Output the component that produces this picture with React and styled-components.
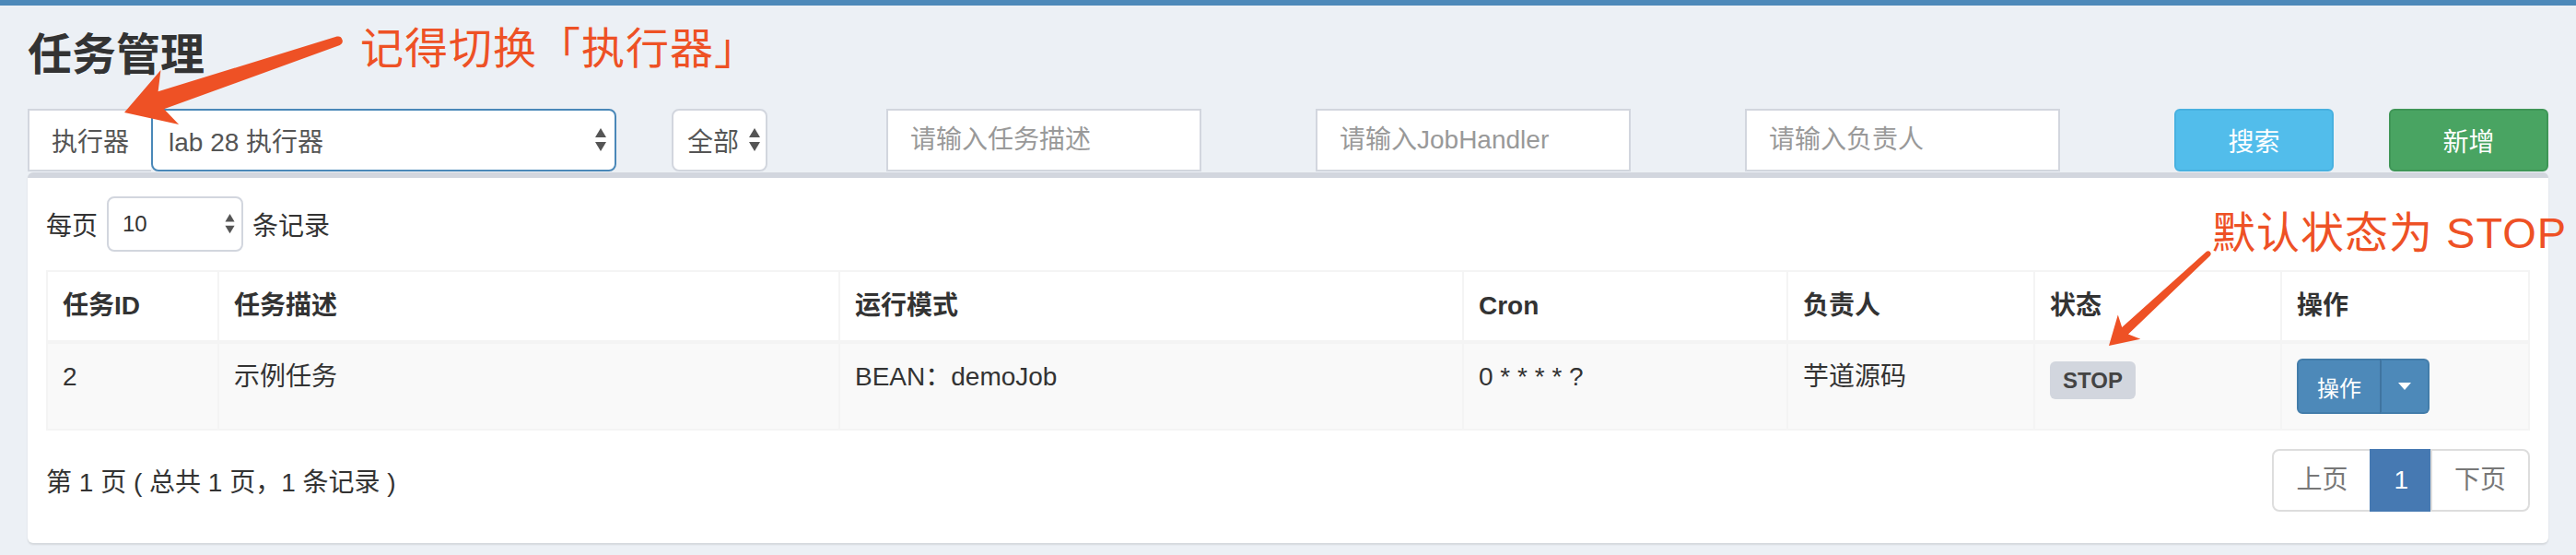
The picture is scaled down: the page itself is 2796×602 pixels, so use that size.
import React from 'react';
import styled, { createGlobalStyle, css } from 'styled-components';

const FONT = `"Liberation Sans", "Noto Sans CJK SC", sans-serif`;
const ACCENT = '#ee5125';

const GlobalStyle = createGlobalStyle`
  *, *::before, *::after { box-sizing: border-box; }
  html, body { margin: 0; padding: 0; background: #ecf0f5; }
  body { font-family: ${FONT}; color: #333; font-size: 28px; }
`;

const Page = styled.div`
  position: relative;
  width: 2796px;
  height: 602px;
  overflow: hidden;
  background: #ecf0f5;
  font-family: ${FONT};
  color: #333;
`;

const TopBar = styled.div`
  height: 6px;
  background: #4d89b9;
`;

const ContentHeader = styled.header`
  padding: 28px 30px 0;
`;

const Title = styled.h1`
  margin: 0;
  font-size: 48px;
  line-height: 52px;
  font-weight: 700;
  color: #333;
`;

const FilterRow = styled.div`
  display: grid;
  grid-template-columns: repeat(12, 1fr);
  margin-top: 32px;
  height: 68px;
`;

const Col = styled.div`
  grid-column: span ${(p) => p.$span};
  padding: 0 30px;
  display: flex;
  align-items: stretch;
`;

const InputGroup = styled.div`
  display: flex;
  flex: 1;
`;

const Addon = styled.span`
  display: flex;
  align-items: center;
  padding: 0 24px;
  background: #fff;
  border: 2px solid #d2d6de;
  border-right: none;
  font-size: 28px;
  color: #555;
  white-space: nowrap;
`;

const SelectBox = styled.div`
  display: flex;
  align-items: center;
  justify-content: space-between;
  gap: ${(p) => p.$gap || 10}px;
  height: ${(p) => p.$h}px;
  ${(p) => (p.$w ? css`width: ${p.$w}px;` : css`flex: ${p.$grow ? 1 : '0 0 auto'};`)}
  padding: 0 ${(p) => p.$pr}px 0 ${(p) => p.$pl}px;
  background: #fff;
  border: 2px solid ${(p) => (p.$focus ? '#4a88b8' : '#d2d6de')};
  border-radius: 8px;
  font-size: ${(p) => p.$fs}px;
  color: ${(p) => p.$color || '#555'};
  white-space: nowrap;
`;

const TextInput = styled.input`
  width: 342px;
  height: 68px;
  padding: 0 24px;
  border: 2px solid #d2d6de;
  border-radius: 0;
  background: #fff;
  font-family: ${FONT};
  font-size: 28px;
  color: #555;
  outline: none;
  &::placeholder { color: #999; }
`;

const variants = {
  info: { bg: '#52bdeb', border: '#48b1e0' },
  success: { bg: '#49a462', border: '#3f9657' },
  primary: { bg: '#4d89b9', border: '#437daa' },
};

const BlockButton = styled.button`
  width: 100%;
  height: 68px;
  border-radius: 6px;
  border: 2px solid ${(p) => variants[p.$variant].border};
  background: ${(p) => variants[p.$variant].bg};
  color: #fff;
  font-family: ${FONT};
  font-size: 28px;
  cursor: pointer;
`;

const BoxWrap = styled.section`
  padding: 1px 30px 0;
`;

const Box = styled.div`
  background: #fff;
  border-top: 6px solid #d2d6de;
  border-radius: 6px;
  box-shadow: 0 2px 2px rgba(0, 0, 0, 0.1);
  padding: 20px 20px 16px;
`;

const LengthRow = styled.div`
  display: flex;
  align-items: center;
  gap: 10px;
  height: 60px;
  font-size: 28px;
  color: #333;
`;

const Table = styled.table`
  width: 100%;
  margin-top: 20px;
  table-layout: fixed;
  border-collapse: separate;
  border-spacing: 0;
  border-top: 2px solid #f4f4f4;
  border-left: 2px solid #f4f4f4;
  font-size: 28px;
`;

const Th = styled.th`
  text-align: left;
  font-weight: 700;
  color: #333;
  line-height: 40px;
  padding: 17px 16px;
  border-right: 2px solid #f4f4f4;
  border-bottom: 4px solid #f4f4f4;
  background: #fff;
`;

const Td = styled.td`
  vertical-align: top;
  line-height: 40px;
  padding: 16px;
  color: #333;
  border-right: 2px solid #f4f4f4;
  border-bottom: 2px solid #f4f4f4;
  background: #f9f9f9;
  white-space: nowrap;
`;

const Label = styled.span`
  display: inline-block;
  margin-top: 3px;
  padding: 9px 14px 8px;
  line-height: 24px;
  font-size: 24px;
  font-weight: 700;
  color: #444;
  background: #d2d6de;
  border-radius: 6px;
  vertical-align: top;
`;

const BtnGroup = styled.div`
  display: inline-flex;
  height: 60px;
  vertical-align: top;
`;

const GroupBtn = styled.button`
  display: flex;
  align-items: center;
  justify-content: center;
  height: 60px;
  padding: 0 ${(p) => (p.$caret ? 18 : 20)}px;
  background: ${variants.primary.bg};
  border: 2px solid ${variants.primary.border};
  color: #fff;
  font-family: ${FONT};
  font-size: 24px;
  border-radius: ${(p) => (p.$caret ? '0 6px 6px 0' : '6px 0 0 6px')};
  ${(p) => p.$caret && css`margin-left: -2px; border-left-color: #3f74a0;`}
`;

const Caret = styled.span`
  width: 0;
  height: 0;
  border-top: 8px solid #fff;
  border-left: 7px solid transparent;
  border-right: 7px solid transparent;
`;

const Footer = styled.div`
  display: flex;
  justify-content: space-between;
  align-items: center;
  margin: 20px 0 18px;
`;

const Info = styled.div`
  font-size: 28px;
  color: #333;
  white-space: pre;
`;

const Pager = styled.ul`
  display: flex;
  margin: 0;
  padding: 0;
  list-style: none;
`;

const PageItem = styled.li`
  height: 68px;
  padding: 0 24px;
  line-height: 64px;
  font-size: 28px;
  border: 2px solid ${(p) => (p.$active ? '#4679b2' : '#ddd')};
  background: ${(p) => (p.$active ? '#4679b2' : '#fff')};
  color: ${(p) => (p.$active ? '#fff' : '#777')};
  &:not(:first-child) { margin-left: -2px; }
  &:first-child { border-radius: 8px 0 0 8px; }
  &:last-child { border-radius: 0 8px 8px 0; }
`;

const Overlay = styled.svg`
  position: absolute;
  left: 0;
  top: 0;
  pointer-events: none;
`;

const Annotation = styled.span`
  position: absolute;
  left: ${(p) => p.$x}px;
  top: ${(p) => p.$y}px;
  font-size: 47px;
  line-height: 47px;
  letter-spacing: 1px;
  color: ${ACCENT};
  white-space: nowrap;
`;

const UpDown = ({ w = 12, h = 26, color = '#555' }) => (
  <svg width={w} height={h} viewBox="0 0 12 26">
    <polygon points="6,0 12,10 0,10" fill={color} />
    <polygon points="0,15 12,15 6,25" fill={color} />
  </svg>
);

const columns = [
  { key: 'id', label: '任务ID', width: 186 },
  { key: 'desc', label: '任务描述', width: 674 },
  { key: 'mode', label: '运行模式', width: 677 },
  { key: 'cron', label: 'Cron', width: 352 },
  { key: 'author', label: '负责人', width: 268 },
  { key: 'status', label: '状态', width: 268 },
  { key: 'ops', label: '操作', width: 269 },
];

const rows = [
  { id: 2, desc: '示例任务', mode: 'BEAN：demoJob', cron: '0 * * * * ?', author: '芋道源码', status: 'STOP' },
];

export default function App() {
  return (
    <Page>
      <GlobalStyle />
      <TopBar />
      <ContentHeader>
        <Title>任务管理</Title>
      </ContentHeader>

      <FilterRow>
        <Col $span={3}>
          <InputGroup>
            <Addon>执行器</Addon>
            <SelectBox $grow $focus $h={68} $pl={17} $pr={9} $fs={28}>
              <span>lab 28 执行器</span>
              <UpDown />
            </SelectBox>
          </InputGroup>
        </Col>
        <Col $span={1}>
          <SelectBox $h={68} $pl={15} $pr={6} $gap={11} $fs={28}>
            <span>全部</span>
            <UpDown />
          </SelectBox>
        </Col>
        <Col $span={2}>
          <TextInput placeholder="请输入任务描述" />
        </Col>
        <Col $span={2}>
          <TextInput placeholder="请输入JobHandler" />
        </Col>
        <Col $span={2}>
          <TextInput placeholder="请输入负责人" />
        </Col>
        <Col $span={1}>
          <BlockButton $variant="info">搜索</BlockButton>
        </Col>
        <Col $span={1}>
          <BlockButton $variant="success">新增</BlockButton>
        </Col>
      </FilterRow>

      <BoxWrap>
        <Box>
          <LengthRow>
            <span>每页</span>
            <SelectBox $w={148} $h={60} $pl={15} $pr={7} $fs={24} $color="#333">
              <span>10</span>
              <UpDown w={11} h={22} />
            </SelectBox>
            <span>条记录</span>
          </LengthRow>

          <Table>
            <colgroup>
              {columns.map((c) => (
                <col key={c.key} style={{ width: c.width }} />
              ))}
            </colgroup>
            <thead>
              <tr>
                {columns.map((c) => (
                  <Th key={c.key}>{c.label}</Th>
                ))}
              </tr>
            </thead>
            <tbody>
              {rows.map((r) => (
                <tr key={r.id}>
                  <Td>{r.id}</Td>
                  <Td>{r.desc}</Td>
                  <Td>{r.mode}</Td>
                  <Td>{r.cron}</Td>
                  <Td>{r.author}</Td>
                  <Td>
                    <Label>{r.status}</Label>
                  </Td>
                  <Td>
                    <BtnGroup>
                      <GroupBtn>操作</GroupBtn>
                      <GroupBtn $caret>
                        <Caret />
                      </GroupBtn>
                    </BtnGroup>
                  </Td>
                </tr>
              ))}
            </tbody>
          </Table>

          <Footer>
            <Info>第 1 页 ( 总共 1 页，1 条记录 )</Info>
            <Pager>
              <PageItem>上页</PageItem>
              <PageItem $active>1</PageItem>
              <PageItem>下页</PageItem>
            </Pager>
          </Footer>
        </Box>
      </BoxWrap>

      <Overlay width="2796" height="602" viewBox="0 0 2796 602">
        <path
          d="M135 122 L174.5 76.1 L171.6 99.2 L365.7 39.6 A5 5 0 0 1 368.9 49 L178 118.2 L194.1 134.9 Z"
          fill={ACCENT}
        />
        <path
          d="M2289 375 L2298.8 341.4 L2303.2 355 L2395 272.8 A3 3 0 0 1 2399 277.2 L2310 362.4 L2323.3 367.8 Z"
          fill={ACCENT}
        />
      </Overlay>
      <Annotation $x={391} $y={29}>记得切换「执行器」</Annotation>
      <Annotation $x={2401} $y={229}>默认状态为 STOP</Annotation>
    </Page>
  );
}
